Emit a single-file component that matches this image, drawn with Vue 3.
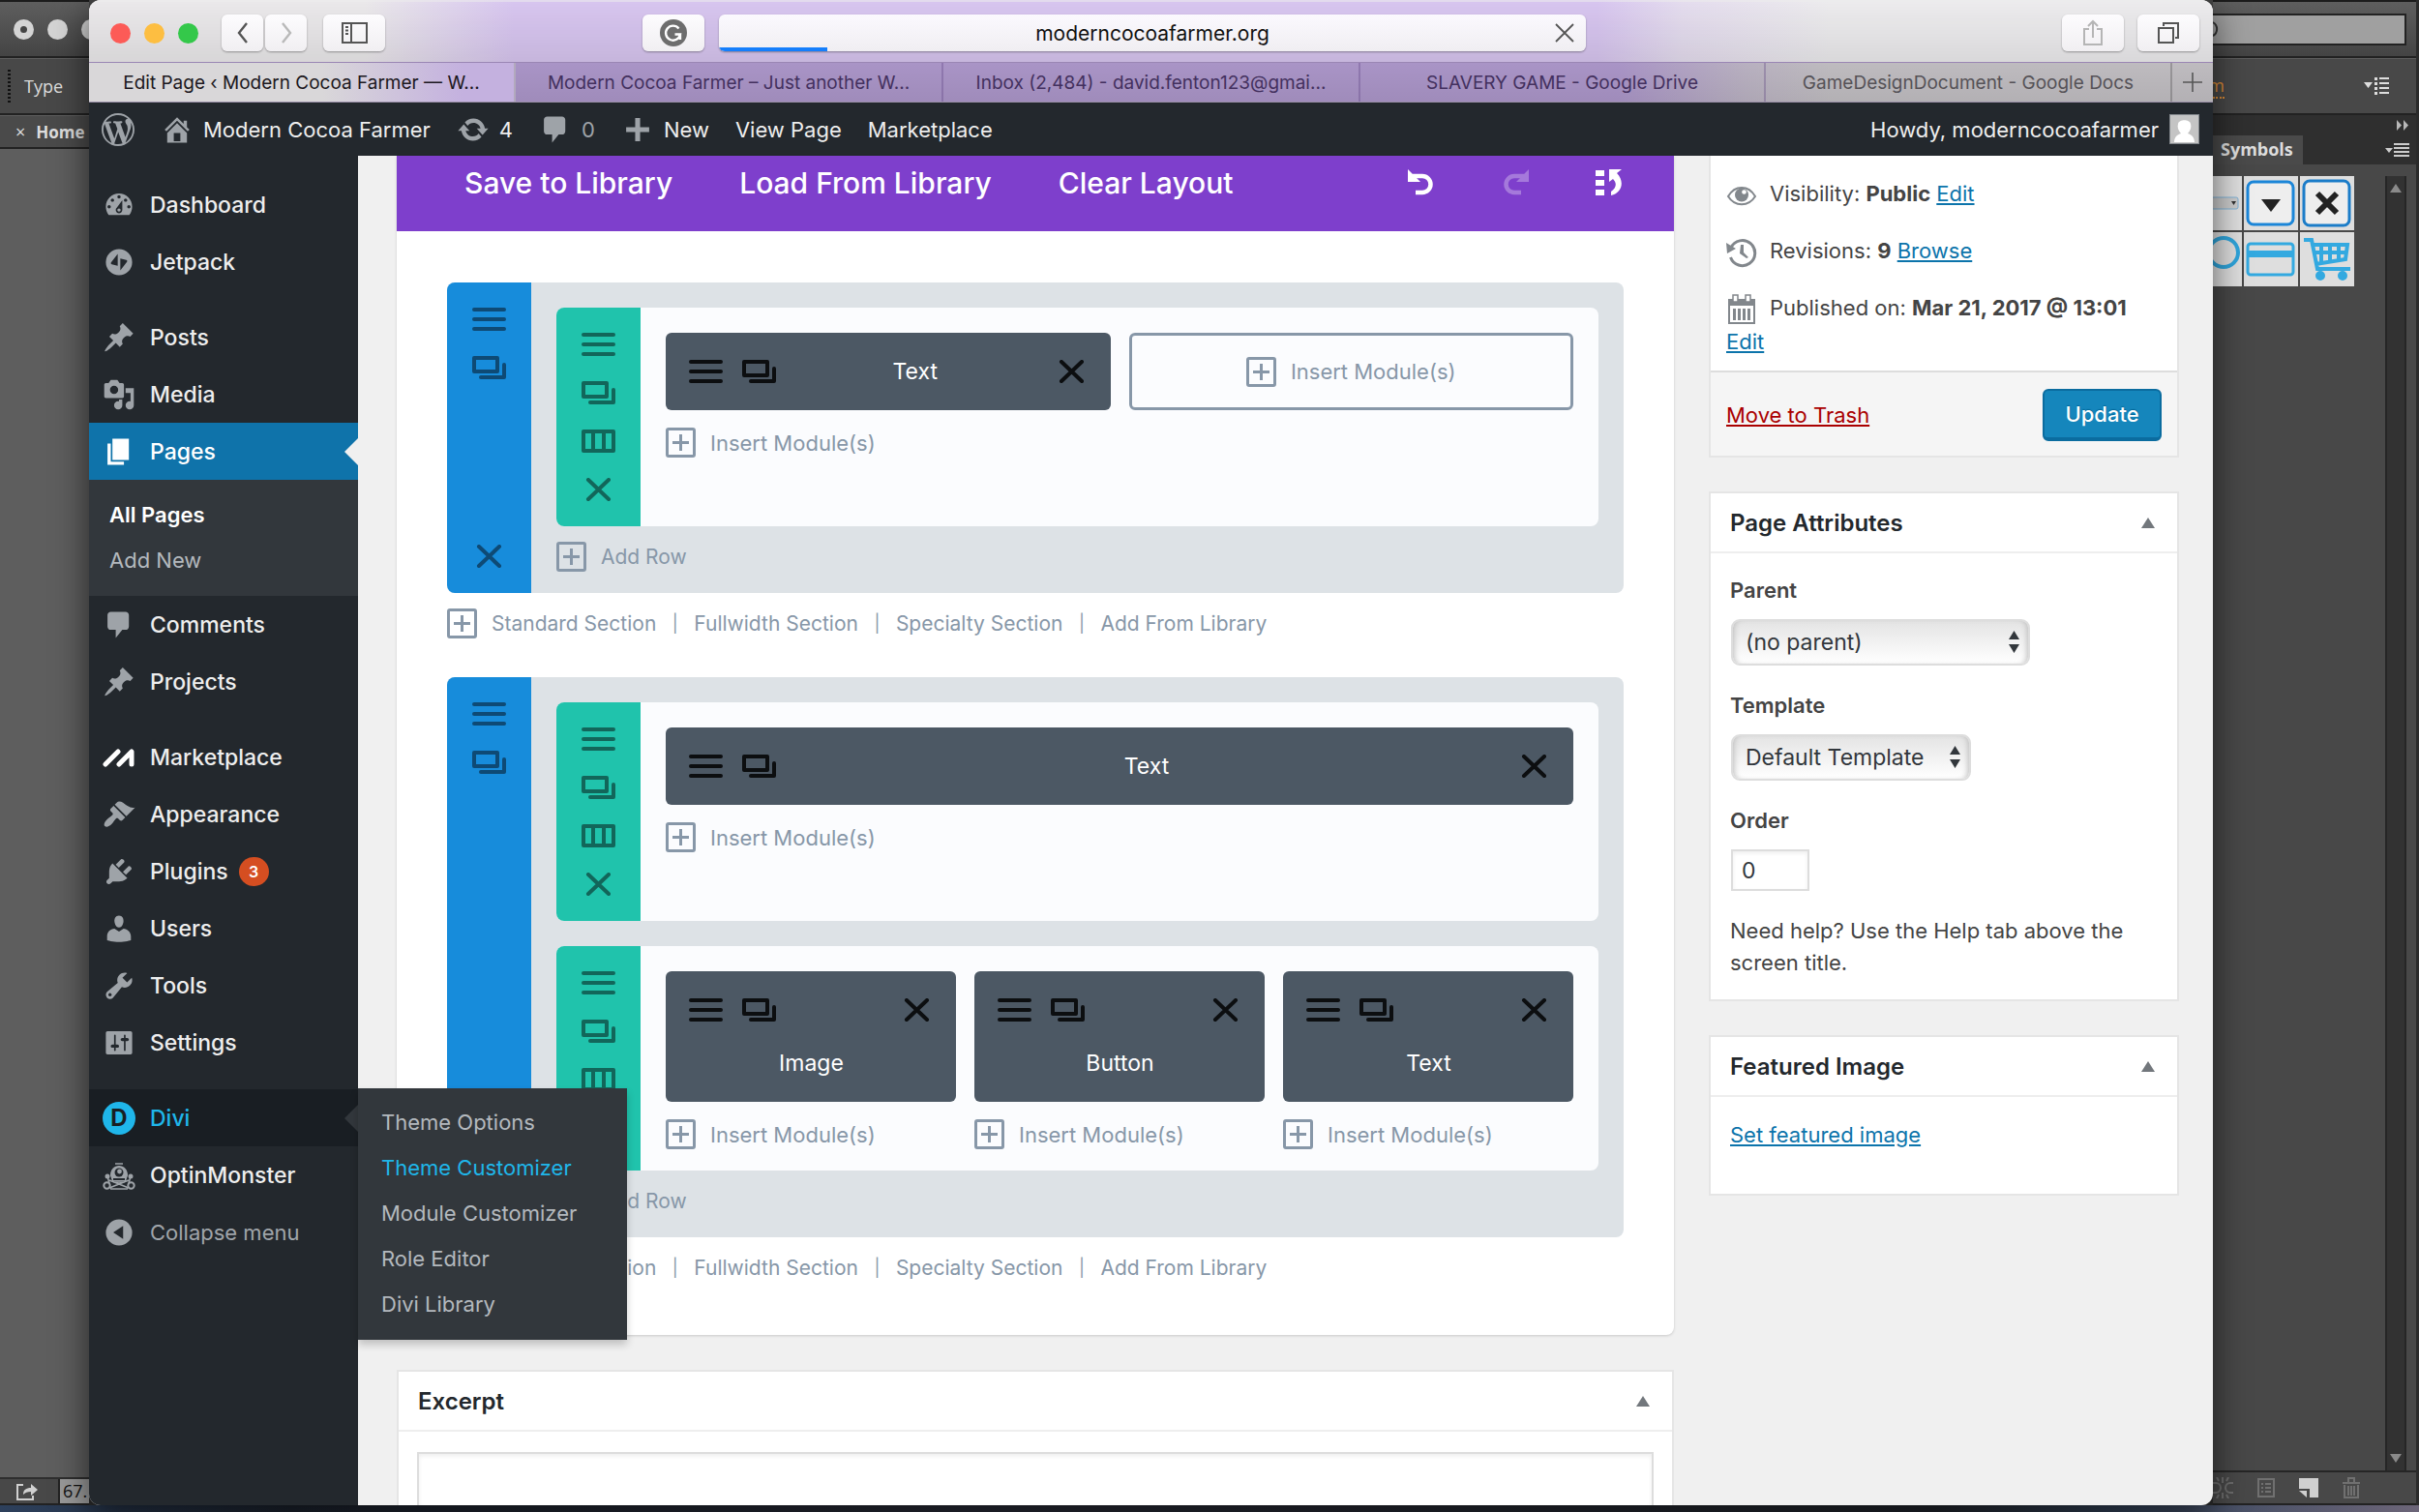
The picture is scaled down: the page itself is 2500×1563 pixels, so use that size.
<template>
  <div class="desktop">
    <div class="screen">
      <!-- drawing app, left edge -->
      <aside class="ai-left">
        <div class="ai-title">
          <span class="ai-dot first"></span>
          <span class="ai-dot"></span>
          <span class="ai-dot"></span>
        </div>
        <div class="ai-options"><i class="grip"></i><span>Type</span></div>
        <div class="ai-tab"><span class="ai-x">×</span><b>Home</b></div>
        <div class="ai-canvas"></div>
        <div class="ai-status">
          <svg width="24" height="20" viewBox="0 0 24 20" fill="none" stroke="#d0d0d0" stroke-width="2">
            <path d="M8 3H2v15h16v-4" />
            <path d="M8 13c0-5 3-7 8-7V2l7 6-7 6v-4c-4 0-6 1-8 3z" fill="#d0d0d0" stroke="none" />
          </svg>
          <span class="ai-zoom">67.</span>
        </div>
      </aside>

      <!-- browser -->
      <div class="browser">
        <header class="toolbar">
          <div class="lights"><i class="red"></i><i class="yellow"></i><i class="green"></i></div>
          <div class="nav-pair">
            <button class="tb back" aria-label="Back">
              <svg width="14" height="24" viewBox="0 0 14 24"><path d="M11 2L3 12l8 10" fill="none" stroke="#555" stroke-width="2.4" /></svg>
            </button>
            <button class="tb forward" aria-label="Forward">
              <svg width="14" height="24" viewBox="0 0 14 24"><path d="M3 2l8 10-8 10" fill="none" stroke="#b9b9b9" stroke-width="2.4" /></svg>
            </button>
          </div>
          <button class="tb wide" aria-label="Sidebar">
            <svg width="27" height="22" viewBox="0 0 27 22" fill="none" stroke="#555" stroke-width="2">
              <rect x="1" y="1" width="25" height="20" /><path d="M10 1v20M4 5h3M4 8.500h3M4 12h3" />
            </svg>
          </button>
          <div class="address-group">
            <button class="tb wide" aria-label="Grammar check">
              <svg width="30" height="30" viewBox="0 0 30 30">
                <circle cx="15" cy="15" r="14" fill="#6d6d6d" />
                <path d="M20.500 10.500a7.500 7.500 0 1 0 1.500 6h-5.500M22 22v-5.500" fill="none" stroke="#fff" stroke-width="2.400" />
              </svg>
            </button>
            <div class="address">
              <input type="text" value="moderncocoafarmer.org" aria-label="Address" />
              <i class="progress"></i>
              <svg class="stop" width="20" height="20" viewBox="0 0 20 20"><path d="M1 1l18 18M19 1L1 19" stroke="#555" stroke-width="1.800" /></svg>
            </div>
          </div>
          <div class="tb-right">
            <button class="tb wide" aria-label="Share">
              <svg width="20" height="28" viewBox="0 0 20 28" fill="none" stroke="#b5b5b5" stroke-width="2">
                <path d="M6 10H1v16h18V10h-5M10 19V2M5 7l5-5 5 5" />
              </svg>
            </button>
            <button class="tb wide" aria-label="Show tabs">
              <svg width="22" height="22" viewBox="0 0 22 22" fill="none" stroke="#555" stroke-width="2">
                <rect x="1" y="6" width="15" height="15" /><path d="M6 4V1h15v15h-3" />
              </svg>
            </button>
          </div>
        </header>

        <nav class="tabs">
          <a v-for="(t, i) in tabs" :key="t" href="#" :class="['tab', 'tab-' + i]">{{ t }}</a>
          <button class="tab-add" aria-label="New tab">
            <svg width="20" height="20" viewBox="0 0 20 20"><path d="M10 0v20M0 10h20" stroke="#555" stroke-width="1.600" /></svg>
          </button>
        </nav>

        <div class="adminbar">
          <svg class="ico wp" viewBox="0 0 20 20"><path :d="icons.wordpress" fill-rule="evenodd" /></svg>
          <a href="#" class="bar-item site"><svg class="ico" viewBox="0 0 20 20"><path :d="icons.home" fill-rule="evenodd" /></svg>Modern Cocoa Farmer</a>
          <a href="#" class="bar-item updates"><svg class="ico" viewBox="0 0 20 20"><path :d="icons.update" /></svg>4</a>
          <a href="#" class="bar-item count"><svg class="ico" viewBox="0 0 20 20"><path :d="icons.comments" /></svg>0</a>
          <a href="#" class="bar-item new"><svg class="ico" viewBox="0 0 20 20"><path d="M8.500 3h3v5.500H17v3h-5.500V17h-3v-5.500H3v-3h5.500z" /></svg>New</a>
          <a href="#" class="bar-item">View Page</a>
          <a href="#" class="bar-item">Marketplace</a>
          <a href="#" class="howdy">Howdy, moderncocoafarmer
            <svg width="31" height="31" viewBox="0 0 31 31">
              <rect width="31" height="31" fill="#c4c4c4" />
              <path d="M5 29c0-5 3-8 7-9-3-3-4-7-3-10 1-5 12-5 13 0 1 3 0 7-3 10 4 1 7 4 7 9z" fill="#fff" />
              <rect x=".5" y=".5" width="30" height="30" fill="none" stroke="#82878c" />
            </svg>
          </a>
        </div>

        <div class="page">
          <ul class="menu">
            <li v-for="m in menu" :key="m.label" :class="[m.state, { gap: m.gap }]">
              <a href="#" class="menu-link">
                <span v-if="m.icon === 'divi'" class="divi-logo">D</span>
                <svg v-else-if="m.icon === 'market'" class="ico" viewBox="0 0 34 34">
                  <path d="M3 24L16 11M17 24L30 11v13" fill="none" stroke="#fff" stroke-width="5" stroke-linecap="round" stroke-linejoin="round" />
                </svg>
                <svg v-else-if="m.icon === 'monster'" class="ico" viewBox="0 0 34 34">
                  <path d="M8 17c0-6 4-10 9-10s9 4 9 10l-2 6H10z" />
                  <path d="M13 5h8M11 24h12M7 22l20 8M27 22L7 30M8 31h18" fill="none" stroke="#9ea3a8" stroke-width="1.600" />
                  <circle cx="17" cy="14" r="4.500" fill="#23282d" /><circle cx="17.500" cy="13" r="2.400" />
                  <path d="M11 20h12v2H11z" fill="#23282d" />
                  <circle cx="5" cy="18" r="2.500" /><circle cx="29" cy="18" r="2.500" />
                  <circle cx="4.500" cy="27.500" r="3.200" fill="none" stroke="#9ea3a8" stroke-width="2" />
                  <circle cx="29.500" cy="27.500" r="3.200" fill="none" stroke="#9ea3a8" stroke-width="2" />
                  <path d="M5 18l2 7M29 18l-2 7" stroke="#9ea3a8" stroke-width="1.600" />
                </svg>
                <svg v-else class="ico" viewBox="0 0 20 20"><path :d="icons[m.icon]" fill-rule="evenodd" /></svg>
                {{ m.label }}
                <span v-if="m.badge" class="badge">{{ m.badge }}</span>
              </a>
              <ul v-if="m.sub" class="sub">
                <li v-for="(s, i) in m.sub" :key="s"><a href="#" :class="{ on: i === m.on }">{{ s }}</a></li>
              </ul>
            </li>
          </ul>

          <main class="content">
            <div class="col-main">
              <section class="builder">
                <div class="builder-bar">
                  <a v-for="b in ['Save to Library', 'Load From Library', 'Clear Layout']" :key="b" href="#">{{ b }}</a>
                  <div class="history">
                    <button aria-label="Undo">
                      <svg width="28" height="28" viewBox="0 0 28 28"><path d="M5 7h10a8.500 8.500 0 0 1 0 17H8" fill="none" stroke="#fff" stroke-width="4.500" /><path d="M0 0v13h13z" /></svg>
                    </button>
                    <button aria-label="Redo" class="dim">
                      <svg width="28" height="28" viewBox="0 0 28 28"><path d="M23 7H13a8.500 8.500 0 0 0 0 17h7" fill="none" stroke="#fff" stroke-width="4.500" /><path d="M28 0v13H15z" /></svg>
                    </button>
                    <button aria-label="History">
                      <svg width="28" height="28" viewBox="0 0 28 28"><path d="M0 1h9v6H0zM0 11h9v6H0zM0 21h9v6H0zM14 0h13l-5 4c8 8 6 20-6 23v-4c6-4 6-9 2-13l-4 3z" /></svg>
                    </button>
                  </div>
                </div>

                <div class="builder-body">
                  <template v-for="(sec, si) in sections" :key="si">
                    <div class="section">
                      <div class="handle blue">
                        <div class="stack">
                          <svg class="g" viewBox="0 0 35 24"><path :d="glyphs.menu" /></svg>
                          <svg class="g" viewBox="0 0 35 24"><path :d="glyphs.clone" /></svg>
                        </div>
                        <svg class="g" viewBox="0 0 35 24"><path :d="glyphs.close" /></svg>
                      </div>
                      <div class="rows">
                        <div v-for="(row, ri) in sec" :key="ri" class="row">
                          <div class="handle teal">
                            <svg v-for="g in ['menu', 'clone', 'columns', 'close']" :key="g" class="g" viewBox="0 0 35 24"><path :d="glyphs[g]" /></svg>
                          </div>
                          <div class="cols">
                            <div v-for="(mod, mi) in row" :key="mi" class="col">
                              <button v-if="!mod" class="empty"><i class="plus"></i>Insert Module(s)</button>
                              <template v-else>
                                <div :class="['module', { tall: row.length > 2 }]">
                                  <svg class="g" viewBox="0 0 35 24"><path :d="glyphs.menu" /></svg>
                                  <svg class="g" viewBox="0 0 35 24"><path :d="glyphs.clone" /></svg>
                                  <span class="name">{{ mod }}</span>
                                  <svg class="g x" viewBox="0 0 35 24"><path :d="glyphs.close" /></svg>
                                </div>
                                <button class="insert"><i class="plus"></i>Insert Module(s)</button>
                              </template>
                            </div>
                          </div>
                        </div>
                        <button class="insert add-row"><i class="plus"></i>Add Row</button>
                      </div>
                    </div>
                    <div class="section-links">
                      <i class="plus"></i>
                      <template v-for="(l, li) in sectionLinks" :key="l">
                        <span v-if="li" class="bar">|</span><a href="#">{{ l }}</a>
                      </template>
                    </div>
                  </template>
                </div>
              </section>

              <section class="box excerpt">
                <h2><label for="excerpt">Excerpt</label><i class="toggle"></i></h2>
                <textarea id="excerpt"></textarea>
              </section>
            </div>

            <div class="col-side">
              <section class="box publish">
                <div class="publish-body">
                  <p>
                    <svg class="pico" viewBox="0 0 32 32">
                      <path d="M2 17C9 5 23 5 30 17 23 28 9 28 2 17z" fill="none" stroke="#82878c" stroke-width="2" />
                      <circle cx="16" cy="15.500" r="7" /><circle cx="18.500" cy="12.500" r="2.300" fill="#fff" />
                    </svg>Visibility: <b>Public</b> <a href="#">Edit</a>
                  </p>
                  <p>
                    <svg class="pico" viewBox="0 0 32 32">
                      <path d="M5 11a13 13 0 1 1-.5 10" fill="none" stroke="#82878c" stroke-width="3" />
                      <path d="M0 6l10 6-9 5zM15 8h3v8l5 5-2 1-7-5z" />
                    </svg>Revisions: <b>9</b> <a href="#">Browse</a>
                  </p>
                  <p>
                    <svg class="pico" viewBox="0 0 32 32">
                      <path d="M2 5h28v26H2zM4 12v17h24V12zM7 15h3v12H7zM12 15h3v12h-3zM17 15h3v12h-3zM22 15h3v12h-3z" fill-rule="evenodd" />
                      <path d="M7 1h5v7H7zM20 1h5v7h-5z" fill="#fff" stroke="#82878c" stroke-width="1.500" />
                    </svg>Published on: <b>Mar 21, 2017 @ 13:01</b> <a href="#">Edit</a>
                  </p>
                </div>
                <div class="publish-foot">
                  <a href="#" class="trash">Move to Trash</a>
                  <button class="update">Update</button>
                </div>
              </section>

              <section class="box">
                <h2>Page Attributes<i class="toggle"></i></h2>
                <div class="attrs">
                  <label for="parent">Parent</label>
                  <div class="select parent">
                    <select id="parent"><option>(no parent)</option></select>
                    <svg width="11" height="23" viewBox="0 0 11 23"><path d="M5.500 0L11 9H0zM5.500 23L0 14h11z" /></svg>
                  </div>
                  <label for="template">Template</label>
                  <div class="select template">
                    <select id="template"><option>Default Template</option></select>
                    <svg width="11" height="23" viewBox="0 0 11 23"><path d="M5.500 0L11 9H0zM5.500 23L0 14h11z" /></svg>
                  </div>
                  <label for="order">Order</label>
                  <input id="order" type="text" value="0" />
                  <p>Need help? Use the Help tab above the screen title.</p>
                </div>
              </section>

              <section class="box">
                <h2>Featured Image<i class="toggle"></i></h2>
                <div class="featured"><a href="#">Set featured image</a></div>
              </section>
            </div>
          </main>
        </div>
      </div>

      <!-- drawing app, right edge -->
      <aside class="ai-right">
        <div class="ai-title"><div class="ai-search"><svg width="6" height="16" viewBox="0 0 6 16"><path d="M0 1a8 8 0 0 1 0 14" fill="none" stroke="#333" stroke-width="2" /></svg></div></div>
        <div class="ai-options">
          <span class="orange">m</span>
          <svg width="26" height="18" viewBox="0 0 26 18" fill="#ddd"><path d="M0 5h9l-4.500 6zM11 0h3v3h-3zM16 0h10v2H16zM11 5h3v3h-3zM16 5h10v2H16zM11 10h3v3h-3zM16 10h10v2H16zM11 15h3v3h-3zM16 15h10v2H16z" /></svg>
        </div>
        <div class="ai-collapse">
          <svg width="12" height="11" viewBox="0 0 12 11" fill="#b8b8b8"><path d="M0 0l5 5.500L0 11zM7 0l5 5.500L7 11z" /></svg>
        </div>
        <div class="ai-tabs">
          <b>Symbols</b>
          <svg width="25" height="15" viewBox="0 0 25 15" fill="#ccc"><path d="M0 5h8l-4 5zM9 0h16v2H9zM9 4h16v2H9zM9 8h16v2H9zM9 12h16v2H9z" /></svg>
        </div>
        <div class="ai-panel">
          <div class="symbols">
            <div class="sym half">
              <svg width="30" height="56" viewBox="0 0 30 56"><rect x="-4" y="22" width="30" height="12" rx="2" fill="#ccc" stroke="#7fb2d8" /><path d="M19 26h5l-2.500 4z" fill="#333" /></svg>
            </div>
            <div class="sym">
              <svg width="56" height="56" viewBox="0 0 56 56"><rect x="4" y="6" width="47" height="44" rx="6" fill="#eee" stroke="#1b86d8" stroke-width="3" /><path d="M18 24h20L28 37z" fill="#222" /></svg>
            </div>
            <div class="sym">
              <svg width="56" height="56" viewBox="0 0 56 56"><rect x="4" y="5" width="47" height="46" rx="6" fill="#eee" stroke="#1b7cc8" stroke-width="3" /><path d="M18 18l20 20M38 18L18 38" stroke="#222" stroke-width="6" /></svg>
            </div>
            <div class="sym half">
              <svg width="30" height="56" viewBox="0 0 30 56"><circle cx="11" cy="21" r="15" fill="none" stroke="#2fa5dc" stroke-width="4" /></svg>
            </div>
            <div class="sym">
              <svg width="56" height="56" viewBox="0 0 56 56"><rect x="4" y="12" width="47" height="32" rx="3" fill="none" stroke="#33a9e0" stroke-width="3" /><path d="M4 19h47v7H4z" fill="#33a9e0" /></svg>
            </div>
            <div class="sym">
              <svg width="56" height="56" viewBox="0 0 56 56" fill="none" stroke="#33a9e0" stroke-width="4"><path d="M4 8h8l6 30h34M13 13h36l-2 15-31 5M22 13v18M31 13v17M40 13v16M14 21h34" /><circle cx="21" cy="45" r="3" fill="#33a9e0" /><circle cx="44" cy="45" r="3" fill="#33a9e0" /></svg>
            </div>
          </div>
          <div class="ai-scroll">
            <svg width="12" height="9" viewBox="0 0 12 9"><path d="M6 0l6 9H0z" fill="#8a8a8a" /></svg>
            <svg width="12" height="9" viewBox="0 0 12 9"><path d="M6 9L0 0h12z" fill="#8a8a8a" /></svg>
          </div>
        </div>
        <div class="ai-foot">
          <svg width="22" height="22" viewBox="0 0 22 22" fill="none" stroke="#6c6c6c" stroke-width="2"><path d="M0 6h3a5 5 0 0 1 0 10H0M21 6h-3a5 5 0 0 0 0 10h3M10 0v6M10 16v6M4 0l2 4M16 0l-2 4M4 22l2-4M16 22l-2-4" /></svg>
          <svg width="18" height="20" viewBox="0 0 18 20" fill="none" stroke="#707070" stroke-width="2"><rect x="1" y="1" width="16" height="18" /><path d="M4 6h2M8 6h6M4 10h2M8 10h6M4 14h2M8 14h6" /></svg>
          <svg width="20" height="20" viewBox="0 0 20 20"><path d="M0 0h20v20h-9v-9H0zM0 13h8v7z" fill="#d0d0d0" /></svg>
          <svg width="20" height="22" viewBox="0 0 20 22" fill="none" stroke="#707070" stroke-width="2"><path d="M1 6h18M7 5V1h6v4M3 8v13h14V8M7 9v10M10 9v10M13 9v10" /></svg>
        </div>
      </aside>
    </div>
    <div class="wallpaper"></div>
  </div>
</template>

<script setup>
const tabs = [
  'Edit Page ‹ Modern Cocoa Farmer — W...',
  'Modern Cocoa Farmer – Just another W...',
  'Inbox (2,484) - david.fenton123@gmai...',
  'SLAVERY GAME - Google Drive',
  'GameDesignDocument - Google Docs'
];

const menu = [
  { label: 'Dashboard', icon: 'dashboard' },
  { label: 'Jetpack', icon: 'jetpack' },
  { label: 'Posts', icon: 'pin', gap: true },
  { label: 'Media', icon: 'media' },
  { label: 'Pages', icon: 'pages', state: 'current', sub: ['All Pages', 'Add New'], on: 0 },
  { label: 'Comments', icon: 'comments' },
  { label: 'Projects', icon: 'pin' },
  { label: 'Marketplace', icon: 'market', gap: true },
  { label: 'Appearance', icon: 'appearance' },
  { label: 'Plugins', icon: 'plugins', badge: 3 },
  { label: 'Users', icon: 'users' },
  { label: 'Tools', icon: 'tools' },
  { label: 'Settings', icon: 'settings' },
  {
    label: 'Divi', icon: 'divi', gap: true, state: 'open', on: 1,
    sub: ['Theme Options', 'Theme Customizer', 'Module Customizer', 'Role Editor', 'Divi Library']
  },
  { label: 'OptinMonster', icon: 'monster' },
  { label: 'Collapse menu', icon: 'collapse', state: 'collapse' }
];

// sections > rows > columns, null is an empty column
const sections = [
  [['Text', null]],
  [['Text'], ['Image', 'Button', 'Text']]
];

const sectionLinks = ['Standard Section', 'Fullwidth Section', 'Specialty Section', 'Add From Library'];

// stroked builder glyphs, 35x24
const glyphs = {
  menu: 'M2 2h31M2 12h31M2 22h31',
  clone: 'M2 2h24v14H2zM33 9v13H9',
  columns: 'M2 2h31v20H2zM12 2v20M23 2v20',
  close: 'M7 2l21 20M28 2L7 22'
};

const icons = {
  dashboard: 'M3.76 16h12.48c1.1-1.37 1.76-3.11 1.76-5 0-4.42-3.58-8-8-8s-8 3.58-8 8c0 1.89.66 3.63 1.76 5zM10 4c.55 0 1 .45 1 1s-.45 1-1 1-1-.45-1-1 .45-1 1-1zM6 6c.55 0 1 .45 1 1s-.45 1-1 1-1-.45-1-1 .45-1 1-1zm8 0c.55 0 1 .45 1 1s-.45 1-1 1-1-.45-1-1 .45-1 1-1zm-5.37 5.55L12 7v6c0 1.1-.9 2-2 2s-2-.9-2-2c0-.57.24-1.08.63-1.45zM4 10c.55 0 1 .45 1 1s-.45 1-1 1-1-.45-1-1 .45-1 1-1zm12 0c.55 0 1 .45 1 1s-.45 1-1 1-1-.45-1-1 .45-1 1-1zm-5 3c0-.55-.45-1-1-1s-1 .45-1 1 .45 1 1 1 1-.45 1-1z',
  jetpack: 'M10 2a8 8 0 1 0 0 16 8 8 0 0 0 0-16zM9.2 5v7.2L5.6 11.300c-.6-.1-.7-.6-.4-1.100zM10.800 15V7.800l3.600.9c.6.1.7.6.4 1.100z',
  pin: 'M10.44 3.02l1.82-1.82 6.36 6.35-1.83 1.82c-1.05-.68-2.48-.57-3.41.36l-.75.75c-.92.93-1.04 2.35-.35 3.41l-1.83 1.82-2.41-2.41-2.8 2.79c-.42.42-3.38 2.71-3.8 2.29s1.86-3.39 2.28-3.81l2.79-2.79L4.1 9.36l1.83-1.82c1.05.69 2.48.57 3.4-.36l.75-.75c.93-.92 1.05-2.35.36-3.41z',
  media: 'M13 11V4c0-.55-.45-1-1-1h-1.67L9 1H5L3.67 3H2c-.55 0-1 .45-1 1v7c0 .55.45 1 1 1h10c.55 0 1-.45 1-1zM7 4.500c1.38 0 2.500 1.120 2.500 2.500S8.380 9.500 7 9.500 4.500 8.380 4.500 7 5.620 4.500 7 4.500zM14 6h5v10.500c0 1.380-1.120 2.500-2.500 2.500S14 17.880 14 16.500s1.120-2.500 2.500-2.500c.17 0 .34.02.5.05V9h-3V6zm-4 8.050V13h2v3.500c0 1.380-1.120 2.500-2.500 2.500S7 17.880 7 16.500 8.120 14 9.500 14c.17 0 .34.02.5.05z',
  pages: 'M6 15V2h10v13H6zm-1 1h8v2H3V5h2v11z',
  comments: 'M5 2h9c1.1 0 2 .9 2 2v7c0 1.1-.9 2-2 2h-2l-4 5v-5H5c-1.1 0-2-.9-2-2V4c0-1.1.9-2 2-2z',
  appearance: 'M14.48 11.06L7.41 3.99l1.5-1.5c.5-.56 2.3-.47 3.51.32 1.21.8 1.43 1.28 2.91 2.1 1.18.64 2.45 1.26 4.45.85zm-.71.71L6.7 4.7 4.93 6.47c-.39.39-.39 1.02 0 1.41l1.06 1.06c.39.39.39 1.03 0 1.42-.6.6-1.43 1.11-2.21 1.69-.35.26-.7.53-1.01.84C1.43 14.23.4 16.08 1.4 17.07c.99 1 2.84-.03 4.18-1.36.31-.31.58-.66.85-1.02.57-.78 1.08-1.61 1.69-2.21.39-.39 1.02-.39 1.41 0l1.06 1.06c.39.39 1.02.39 1.41 0z',
  plugins: 'M13.11 4.36L9.87 7.6 8 5.73l3.24-3.24c.35-.34 1.05-.2 1.56.32.52.51.66 1.21.31 1.55zm-8 1.77l.91-1.12 9.01 9.01-1.19.84c-.71.71-2.63 1.16-3.82 1.16H6.14L4.9 17.26c-.59.59-1.54.59-2.12 0-.59-.58-.59-1.53 0-2.12l1.24-1.24v-3.88c0-1.13.4-3.19 1.09-3.89zm7.26 3.97l3.24-3.24c.34-.35 1.04-.21 1.55.31.52.51.66 1.21.31 1.55l-3.24 3.25z',
  users: 'M10 9.25c-2.27 0-2.73-3.44-2.73-3.44C7 4.02 7.82 2 9.97 2c2.16 0 2.98 2.02 2.71 3.81 0 0-.41 3.44-2.68 3.44zm0 2.57L12.72 10c2.39 0 4.52 2.33 4.52 4.53v2.49s-3.65 1.13-7.24 1.13c-3.65 0-7.24-1.13-7.24-1.13v-2.49c0-2.25 1.94-4.48 4.47-4.48z',
  tools: 'M16.68 9.77c-1.34 1.34-3.3 1.67-4.95.99l-5.41 6.52c-.99.99-2.59.99-3.58 0s-.99-2.59 0-3.57l6.52-5.42c-.68-1.65-.35-3.61.99-4.95 1.28-1.28 3.12-1.62 4.72-1.06l-2.89 2.89 2.82 2.82 2.86-2.87c.53 1.58.18 3.39-1.08 4.65zM3.81 16.21c.4.39 1.04.39 1.43 0 .4-.4.4-1.04 0-1.43-.39-.4-1.03-.4-1.43 0-.39.39-.39 1.03 0 1.43z',
  settings: 'M18 16V4c0-.55-.45-1-1-1H3c-.55 0-1 .45-1 1v12c0 .55.45 1 1 1h14c.55 0 1-.45 1-1zM8 11h1c.55 0 1 .45 1 1s-.45 1-1 1H8v1.500c0 .28-.22.5-.5.5s-.5-.22-.5-.5V13H6c-.55 0-1-.45-1-1s.45-1 1-1h1V5.500c0-.28.22-.5.5-.5s.5.22.5.5V11zm5-2h-1c-.55 0-1-.45-1-1s.45-1 1-1h1V5.500c0-.28.22-.5.5-.5s.5.22.5.5V7h1c.55 0 1 .45 1 1s-.45 1-1 1h-1v5.500c0 .28-.22.5-.5.5s-.5-.22-.5-.5V9z',
  collapse: 'M10 2a8 8 0 1 0 0 16 8 8 0 0 0 0-16zM12.500 6v8L6.500 10z',
  home: 'M16 8.500l1.530 1.530-1.060 1.060L10 4.600l-6.470 6.490-1.060-1.060L10 2.500l4 4v-2h2v4zm-6-2.460l6 5.990V18H4v-5.970zM12 17v-5H8v5h4z',
  update: 'M10.2 3.28c3.53 0 6.43 2.61 6.92 6h2.08l-3.5 4-3.5-4h2.32c-.45-1.97-2.21-3.45-4.32-3.45-1.45 0-2.73.71-3.54 1.78L4.95 5.66C6.23 4.2 8.11 3.28 10.2 3.28zm-.4 13.44c-3.52 0-6.43-2.61-6.92-6H.8l3.5-4c1.17 1.33 2.33 2.67 3.5 4H5.48c.45 1.97 2.21 3.45 4.32 3.45 1.45 0 2.73-.71 3.54-1.78l1.71 1.95c-1.28 1.46-3.15 2.38-5.25 2.38z',
  wordpress: 'M20 10c0-5.51-4.49-10-10-10C4.48 0 0 4.49 0 10c0 5.52 4.48 10 10 10 5.51 0 10-4.48 10-10zM7.78 15.37L4.37 6.22c.55-.02 1.17-.08 1.17-.08.5-.06.44-1.13-.06-1.11 0 0-1.45.11-2.37.11-.18 0-.37 0-.58-.01C4.12 2.69 6.87 1.11 10 1.11c2.33 0 4.45.87 6.05 2.34-.68-.11-1.65.39-1.65 1.58 0 .74.45 1.36.9 2.1.35.61.55 1.36.55 2.46 0 1.49-1.4 5-1.4 5l-3.03-8.37c.54-.02.82-.17.82-.17.5-.05.44-1.25-.06-1.22 0 0-1.44.12-2.38.12-.87 0-2.33-.12-2.33-.12-.5-.03-.56 1.2-.06 1.22l.92.08 1.26 3.41zM17.41 10c.24-.64.74-1.87.43-4.25.7 1.29 1.05 2.71 1.05 4.25 0 3.29-1.73 6.24-4.4 7.78.97-2.59 1.94-5.2 2.92-7.78zM6.1 18.09C3.12 16.65 1.11 13.53 1.11 10c0-1.3.23-2.48.72-3.59C3.25 10.3 4.67 14.2 6.1 18.09zm4.03-6.63l2.58 6.98c-.86.29-1.76.45-2.71.45-.79 0-1.57-.11-2.29-.33.81-2.38 1.62-4.74 2.42-7.1z'
};
</script>

<style>
body {
  margin: 0;
  background: #2a3038;
}
</style>

<style scoped>
* {
  box-sizing: border-box;
}
.desktop {
  min-height: 100vh;
  display: flex;
  flex-direction: column;
  font-family: Inter, "Liberation Sans", sans-serif;
  font-size: 22px;
  color: #444;
}
.screen {
  flex: 1;
  display: flex;
  background: linear-gradient(#444 60%, #2b2b2b);
}
.wallpaper {
  height: 7px;
  background: linear-gradient(90deg, #2d405c, #1d242f 12%, #2a2c38 40%, #22262d 80%, #35455c 88%, #6c6578);
}
button {
  font-family: inherit;
  cursor: pointer;
}
a {
  color: inherit;
  text-decoration: none;
}

/* drawing app behind */
.ai-left,
.ai-right {
  display: flex;
  flex-direction: column;
  flex: none;
  overflow: hidden;
  font-family: "Open Sans", sans-serif;
  font-size: 18px;
  color: #ddd;
}
.ai-left {
  width: 92px;
}
.ai-right {
  width: 213px;
  border-right: 3px solid #2a2a2a;
}
.ai-title {
  height: 60px;
  display: flex;
  align-items: center;
  flex: none;
  gap: 14px;
  padding-left: 14px;
  border-top: 2px solid #1c1c1c;
  border-bottom: 2px solid #222;
  background: linear-gradient(#5e5e5e, #444);
}
.ai-dot {
  width: 21px;
  height: 21px;
  border-radius: 50%;
  background: #d4d4d4;
  flex: none;
}
.ai-dot.first {
  border: 7px solid #d4d4d4;
  background: #444;
}
.ai-options {
  height: 59px;
  display: flex;
  align-items: center;
  flex: none;
  gap: 14px;
  padding-left: 8px;
  border-top: 1px solid #5c5c5c;
  border-bottom: 2px solid #222;
  background: #484848;
}
.grip {
  width: 3px;
  height: 35px;
  background: repeating-linear-gradient(#111 0 2px, #484848 2px 4px);
}
.ai-tab {
  height: 35px;
  display: flex;
  align-items: center;
  flex: none;
  gap: 11px;
  padding-left: 16px;
  border-top: 1px solid #5c5c5c;
  border-bottom: 2px solid #222;
  background: #4a4a4a;
}
.ai-tab b {
  font-size: 17px;
}
.ai-canvas {
  flex: 1;
  background: #5e5e5e;
}
.ai-status {
  height: 29px;
  display: flex;
  align-items: center;
  justify-content: space-between;
  padding-left: 16px;
  border-top: 2px solid #2e2e2e;
  border-bottom: 2px solid #222;
  background: #484848;
}
.ai-zoom {
  width: 32px;
  padding-left: 3px;
  border-left: 2px solid #222;
  background: #999;
  color: #111;
  line-height: 25px;
}
.ai-right .ai-title {
  padding: 0 10px 0 0;
}
.ai-search {
  flex: 1;
  height: 33px;
  display: flex;
  align-items: center;
  border: 2px solid #222;
  border-left: 0;
  background: #a0a0a0;
}
.ai-right .ai-options {
  padding: 0 28px 0 0;
  justify-content: space-between;
}
.orange {
  width: 12px;
  display: flex;
  justify-content: flex-end;
  line-height: 24px;
  color: #d98a35;
  border-bottom: 2px dotted #d98a35;
}
.ai-collapse {
  height: 21px;
  flex: none;
  display: flex;
  align-items: center;
  justify-content: flex-end;
  padding-right: 8px;
  background: #2f2f2f;
}
.ai-tabs {
  height: 30px;
  flex: none;
  display: flex;
  align-items: center;
  justify-content: space-between;
  padding-right: 7px;
  background: #2f2f2f;
}
.ai-tabs b {
  height: 30px;
  padding: 0 10px 0 8px;
  line-height: 28px;
  font-size: 18px;
  background: #4a4a4a;
}
.ai-panel {
  flex: 1;
  display: flex;
  justify-content: space-between;
  align-items: stretch;
  padding: 12px 10px 0 0;
  background: #484848;
}
.symbols {
  display: grid;
  grid-template-columns: 30px 56px 56px;
  gap: 2px;
  align-content: start;
}
.sym {
  height: 56px;
  background: #dedede;
}
.sym svg {
  display: block;
}
.ai-scroll {
  width: 22px;
  display: flex;
  flex-direction: column;
  align-items: center;
  justify-content: space-between;
  padding: 8px 0;
  border: 2px solid #262626;
  border-width: 0 2px;
  background: #323232;
}
.ai-foot {
  height: 36px;
  display: flex;
  align-items: center;
  justify-content: space-between;
  padding-right: 57px;
  border-top: 2px solid #262626;
  border-bottom: 2px solid #222;
  background: #484848;
}

/* browser chrome */
.browser {
  position: relative;
  z-index: 1;
  flex: 1;
  min-width: 0;
  display: flex;
  flex-direction: column;
  border-radius: 12px;
  overflow: hidden;
  box-shadow: 0 10px 36px rgba(0, 0, 0, 0.6);
  background: #f0f0f0;
}
.toolbar {
  position: relative;
  height: 64px;
  flex: none;
  display: flex;
  align-items: center;
  padding: 2px 14px 0 22px;
  border-top: 2px solid rgba(255, 255, 255, 0.5);
  background:
    linear-gradient(transparent, rgba(0, 0, 0, 0.08)),
    linear-gradient(90deg, #eae8ea 13%, #d7c5ef 20%, #d7c5ef 71%, #e4dcee 75%, #ecebed 82%);
}
.lights {
  display: flex;
  gap: 14px;
  margin-right: 24px;
}
.lights i {
  width: 21px;
  height: 21px;
  border-radius: 50%;
}
.red { background: #fc5b57; }
.yellow { background: #fdbe41; }
.green { background: #34c84a; }
.tb {
  height: 38px;
  display: flex;
  align-items: center;
  justify-content: center;
  padding: 0;
  border: 0;
  border-radius: 6px;
  background: linear-gradient(#fdfcfe, #f1eff2);
  box-shadow: 0 1px 2px rgba(0, 0, 0, 0.35);
}
.tb.wide {
  width: 64px;
}
.nav-pair {
  display: flex;
  gap: 2px;
  margin-right: 17px;
}
.nav-pair .tb {
  width: 43px;
}
.address-group {
  flex: 1;
  display: flex;
  justify-content: center;
  gap: 15px;
  padding-right: 226px;
}
.address {
  position: relative;
  width: 896px;
  height: 38px;
  border-radius: 6px;
  overflow: hidden;
  background: linear-gradient(#fbf9fe, #f0eef2);
  box-shadow: 0 1px 2px rgba(0, 0, 0, 0.35);
}
.address input {
  width: 100%;
  height: 100%;
  padding: 0;
  border: 0;
  background: none;
  font: 21px Inter, sans-serif;
  text-align: center;
  color: #111;
}
.progress {
  position: absolute;
  left: 0;
  bottom: 0;
  width: 112px;
  height: 4px;
  background: #157efb;
}
.stop {
  position: absolute;
  right: 12px;
  top: 9px;
}
.tb-right {
  display: flex;
  gap: 14px;
}
.tabs {
  height: 42px;
  flex: none;
  display: grid;
  grid-template-columns: 441fr 442fr 431fr 419fr 420fr 42px;
  border-top: 1px solid #9a86b4;
  border-bottom: 1px solid #9a8fa8;
  background:
    linear-gradient(transparent, rgba(0, 0, 0, 0.06)),
    linear-gradient(90deg, #a994c6 72%, #b8b0c0 78%, #bebbbf 82%);
  font-size: 19px;
}
.tab {
  overflow: hidden;
  padding: 0 16px;
  line-height: 42px;
  text-align: center;
  white-space: nowrap;
  border-right: 2px solid rgba(80, 50, 120, 0.28);
  color: #43305e;
}
.tab-0 {
  background: linear-gradient(90deg, #d9d7d9 55%, #c4b1df 88%);
  color: #1b1720;
}
.tab-4 {
  border-color: rgba(0, 0, 0, 0.2);
  color: #555257;
}
.tab-add {
  display: flex;
  align-items: center;
  justify-content: center;
  border: 0;
  background: none;
  padding: 0;
}

/* admin bar */
.ico {
  width: 34px;
  height: 34px;
  flex: none;
  fill: #9ea3a8;
}
.adminbar {
  height: 55px;
  flex: none;
  display: flex;
  align-items: center;
  padding: 0 14px 0 13px;
  background: #23282d;
  color: #eee;
}
.bar-item {
  display: flex;
  align-items: center;
  gap: 10px;
  margin-right: 27px;
}
.site {
  margin-left: 27px;
}
.count {
  color: #9ea3a8;
}
.howdy {
  margin-left: auto;
  display: flex;
  align-items: center;
  gap: 11px;
}
.page {
  flex: 1;
  display: flex;
  align-items: stretch;
}

/* admin menu */
.menu,
.sub {
  margin: 0;
  padding: 0;
  list-style: none;
}
.menu {
  width: 278px;
  flex: none;
  padding-top: 21px;
  background: #23282d;
  color: #eee;
}
.menu > li {
  position: relative;
}
.gap {
  margin-top: 19px;
}
.menu-link {
  height: 59px;
  display: flex;
  align-items: center;
  gap: 15px;
  padding-left: 14px;
  font-size: 23px;
  font-weight: 500;
}
.current .menu-link {
  position: relative;
  background: #0f73aa;
  color: #fff;
}
.current .menu-link::after,
.open .menu-link::after {
  content: "";
  position: absolute;
  right: 0;
  top: 16px;
  border: 14px solid transparent;
  border-left: 0;
  border-right-color: #f0f0f0;
}
.current .ico {
  fill: #fff;
}
.current .sub {
  height: 120px;
  padding: 13px 0 0 21px;
  background: #32373c;
}
.sub a {
  display: block;
  font-size: 22px;
  line-height: 47px;
  color: #b4b9be;
}
.current .sub .on {
  font-weight: 600;
  color: #fff;
}
.open .menu-link {
  background: #191e23;
  color: #1fb6ea;
}
.open .menu-link::after {
  border-right-color: #32373c;
}
.open .sub {
  position: absolute;
  z-index: 5;
  left: 100%;
  top: -1px;
  width: 278px;
  padding: 12px 0 13px 24px;
  background: #32373c;
  box-shadow: 0 5px 8px rgba(0, 0, 0, 0.2);
}
.open .sub .on {
  color: #1fb6ea;
}
.collapse .menu-link {
  font-size: 22px;
  font-weight: 400;
  color: #a0a5aa;
}
.divi-logo {
  width: 34px;
  height: 34px;
  border-radius: 50%;
  background: #1fb6ea;
  color: #191e23;
  font-weight: 700;
  font-size: 24px;
  line-height: 34px;
  text-align: center;
}
.badge {
  width: 31px;
  height: 30px;
  margin-left: -4px;
  border-radius: 15px;
  background: #d54e21;
  color: #fff;
  font-size: 16px;
  font-weight: 600;
  line-height: 30px;
  text-align: center;
}

/* content */
.content {
  flex: 1;
  min-width: 0;
  display: grid;
  grid-template-columns: minmax(0, 1fr) 486px;
  gap: 36px;
  padding: 0 35px 0 40px;
}
.col-main,
.col-side {
  display: flex;
  flex-direction: column;
  gap: 36px;
}
.col-side {
  gap: 35px;
}
.builder {
  border-radius: 0 0 8px 8px;
  background: #fff;
  box-shadow: 0 1px 3px rgba(0, 0, 0, 0.16);
}
.builder-bar {
  display: flex;
  align-items: center;
  gap: 69px;
  padding: 10px 53px 32px 70px;
  background: #7e3fcc;
  color: #fff;
  font-size: 30px;
  font-weight: 500;
  line-height: 36px;
}
.history {
  margin-left: auto;
  display: flex;
  gap: 69px;
}
.history button {
  display: flex;
  padding: 0;
  border: 0;
  background: none;
}
.history svg {
  fill: #fff;
}
.dim {
  opacity: 0.3;
}
.builder-body {
  padding: 53px 52px 14px;
}
.section {
  display: flex;
  border-radius: 8px;
  overflow: hidden;
  background: #dde2e6;
}
.handle {
  width: 87px;
  flex: none;
  display: flex;
  flex-direction: column;
  align-items: center;
  padding: 26px 0;
}
.blue {
  justify-content: space-between;
  background: #178cdb;
  color: #0e4a75;
}
.stack {
  display: flex;
  flex-direction: column;
  gap: 26px;
}
.teal {
  gap: 26px;
  background: #20c3ac;
  color: #12665a;
}
.g {
  width: 35px;
  height: 24px;
  flex: none;
  fill: none;
  stroke: currentColor;
  stroke-width: 4;
  stroke-linecap: round;
  stroke-linejoin: round;
}
.rows {
  flex: 1;
  display: flex;
  flex-direction: column;
  padding: 26px 26px 22px;
}
.row {
  display: flex;
  border-radius: 8px;
  overflow: hidden;
  background: #fbfcfe;
}
.row + .row {
  margin-top: 26px;
}
.cols {
  flex: 1;
  display: flex;
  gap: 19px;
  padding: 26px 26px 22px;
}
.col {
  flex: 1;
}
.module {
  height: 80px;
  display: flex;
  align-items: center;
  gap: 20px;
  padding: 0 23px 0 24px;
  border-radius: 6px;
  background: #4c5864;
  color: #0c0e10;
}
.name {
  flex: 1;
  color: #fff;
  font-size: 23px;
  text-align: center;
}
.tall {
  height: 135px;
  flex-wrap: wrap;
  align-content: space-between;
  padding-top: 28px;
  padding-bottom: 24px;
}
.tall .name {
  order: 1;
  flex: 0 0 100%;
  line-height: 32px;
}
.tall .x {
  margin-left: auto;
}
.empty,
.insert {
  display: flex;
  align-items: center;
  gap: 15px;
  padding: 0;
  border: 0;
  background: none;
  color: #8797a8;
  font-size: 22px;
}
.empty {
  width: 100%;
  height: 80px;
  justify-content: center;
  border: 3px solid #8797a8;
  border-radius: 6px;
}
.insert {
  margin-top: 18px;
}
.add-row {
  margin-top: 16px;
  font-size: 21px;
}
.plus {
  width: 31px;
  height: 31px;
  flex: none;
  border: 3px solid #8797a8;
  border-radius: 3px;
  background:
    linear-gradient(#8797a8, #8797a8) center / 17px 3px no-repeat,
    linear-gradient(#8797a8, #8797a8) center / 3px 17px no-repeat;
}
.section-links {
  display: flex;
  align-items: center;
  padding: 16px 0 40px;
  color: #8797a8;
  font-size: 21px;
}
.section-links .plus {
  margin-right: 15px;
}
.bar {
  width: 39px;
  font-size: 18px;
  text-align: center;
}

/* boxes */
.box {
  border: 2px solid #e5e5e5;
  background: #fff;
}
.box h2 {
  height: 62px;
  margin: 0;
  display: flex;
  align-items: center;
  justify-content: space-between;
  padding: 0 23px 0 20px;
  border-bottom: 2px solid #eee;
  font-size: 24px;
  font-weight: 600;
  color: #23282d;
}
.toggle {
  border: 7px solid transparent;
  border-top: 0;
  border-bottom: 11px solid #72777c;
}
.excerpt {
  flex: 1;
  display: flex;
  flex-direction: column;
  border-bottom: 0;
}
.excerpt textarea {
  flex: 1;
  min-height: 54px;
  margin: 21px 19px 0;
  border: 2px solid #ddd;
  border-bottom: 0;
  box-shadow: inset 0 2px 4px rgba(0, 0, 0, 0.07);
  resize: none;
}
.publish {
  border-top: 0;
}
.publish-body {
  padding: 22px 16px 12px;
  border-bottom: 2px solid #ddd;
}
.publish-body p {
  margin: 0 0 24px;
  line-height: 35px;
}
.publish-body p:last-child {
  margin: 0;
}
.pico {
  width: 32px;
  height: 32px;
  margin-right: 13px;
  vertical-align: middle;
  fill: #82878c;
}
.box b {
  font-weight: 700;
}
.box a {
  color: #0c74ab;
  text-decoration: underline;
}
.publish-foot {
  display: flex;
  align-items: center;
  justify-content: space-between;
  padding: 17px 16px 15px;
  background: #f5f5f5;
}
.box .trash {
  color: #a00;
}
.update {
  width: 123px;
  height: 54px;
  padding: 0;
  border: 2px solid #0b6c9f;
  border-bottom-width: 4px;
  border-radius: 6px;
  background: #1586bc;
  color: #fff;
  font-size: 22px;
  font-weight: 500;
  text-shadow: 0 -1px 1px #006799;
}
.attrs {
  display: flex;
  flex-direction: column;
  align-items: flex-start;
  padding: 23px 20px 21px;
}
.attrs label {
  line-height: 30px;
  margin-bottom: 15px;
  font-weight: 600;
  font-size: 22px;
}
.select {
  position: relative;
  margin: 0 0 26px 1px;
}
.select select {
  width: 100%;
  height: 48px;
  padding: 0 13px;
  border: 2px solid #ddd;
  border-radius: 9px;
  appearance: none;
  background: linear-gradient(#e4e4e4, #fff);
  box-shadow: inset 5px 0 6px -4px #bbb, inset -5px 0 6px -4px #bbb;
  color: #32373c;
  font: 23px Inter, sans-serif;
}
.select svg {
  position: absolute;
  right: 11px;
  top: 12px;
  fill: #32373c;
}
.parent {
  width: 309px;
}
.template {
  width: 248px;
}
.attrs input {
  width: 81px;
  height: 43px;
  margin: 0 0 25px 1px;
  padding: 0 9px;
  border: 2px solid #ddd;
  box-shadow: inset 0 2px 4px rgba(0, 0, 0, 0.07);
  color: #32373c;
  font: 23px Inter, sans-serif;
}
.attrs p {
  margin: 0;
  line-height: 33px;
  font-size: 22px;
}
.featured {
  padding: 22px 20px 43px;
  line-height: 35px;
}
</style>
